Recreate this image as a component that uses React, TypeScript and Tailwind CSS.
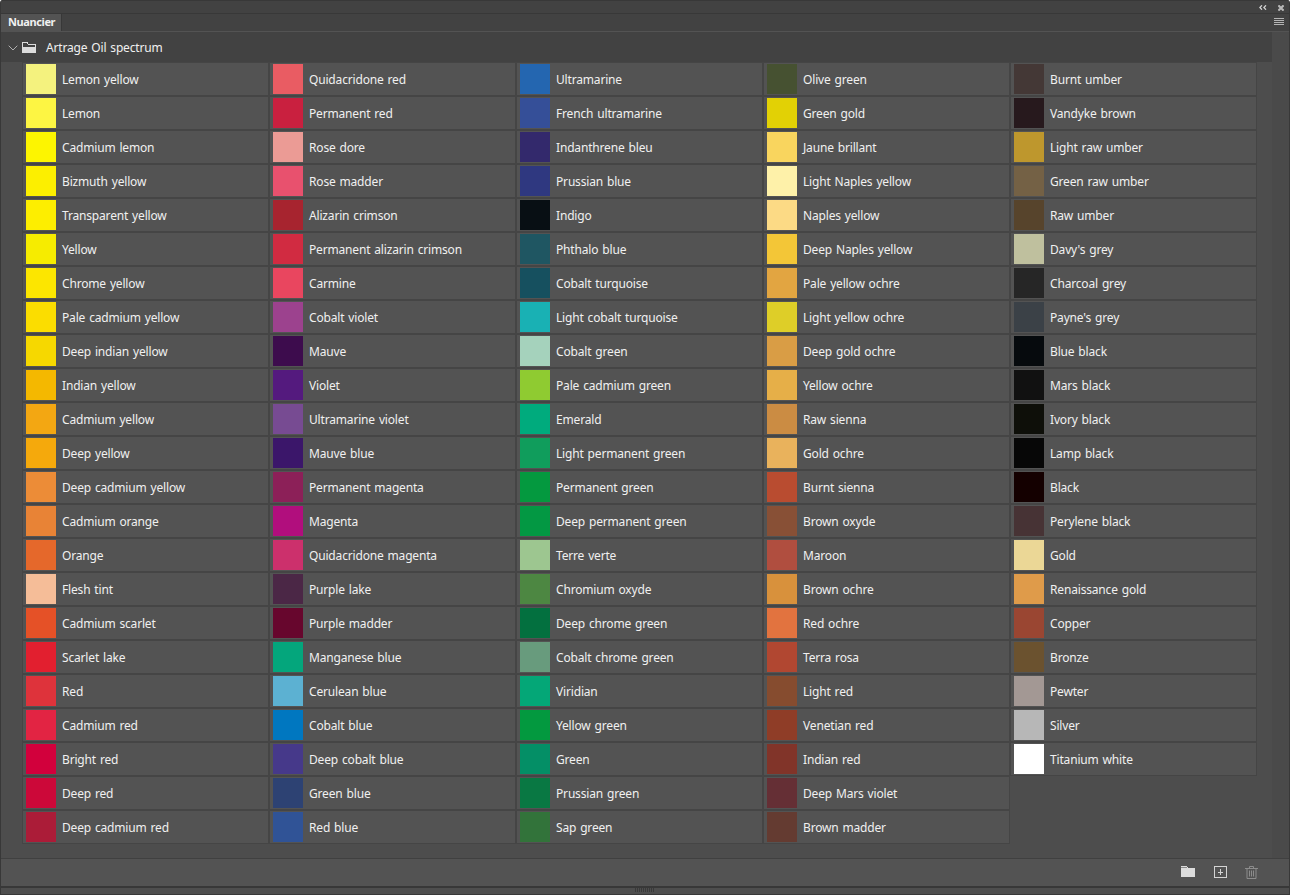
type Swatch = [name: string, color: string];

const columns: Swatch[][] = [
  [
    ["Lemon yellow", "#f4f27e"],
    ["Lemon", "#fdf543"],
    ["Cadmium lemon", "#fdf500"],
    ["Bizmuth yellow", "#fcef00"],
    ["Transparent yellow", "#fdee00"],
    ["Yellow", "#f6ec00"],
    ["Chrome yellow", "#fce600"],
    ["Pale cadmium yellow", "#fbdd00"],
    ["Deep indian yellow", "#f6d800"],
    ["Indian yellow", "#f4b800"],
    ["Cadmium yellow", "#f3a712"],
    ["Deep yellow", "#f5a90c"],
    ["Deep cadmium yellow", "#ec8c37"],
    ["Cadmium orange", "#e88336"],
    ["Orange", "#e5682b"],
    ["Flesh tint", "#f5bd98"],
    ["Cadmium scarlet", "#e55127"],
    ["Scarlet lake", "#e21f2f"],
    ["Red", "#de333b"],
    ["Cadmium red", "#e22443"],
    ["Bright red", "#d2003c"],
    ["Deep red", "#cc0839"],
    ["Deep cadmium red", "#ab1c38"],
  ],
  [
    ["Quidacridone red", "#e95c63"],
    ["Permanent red", "#c9203f"],
    ["Rose dore", "#eb9b95"],
    ["Rose madder", "#e8516e"],
    ["Alizarin crimson", "#a7242f"],
    ["Permanent alizarin crimson", "#d12b41"],
    ["Carmine", "#e9465f"],
    ["Cobalt violet", "#9c428e"],
    ["Mauve", "#3d0c4d"],
    ["Violet", "#541a7e"],
    ["Ultramarine violet", "#774b92"],
    ["Mauve blue", "#3b166a"],
    ["Permanent magenta", "#8c2058"],
    ["Magenta", "#b10e7d"],
    ["Quidacridone magenta", "#cc306c"],
    ["Purple lake", "#4b2746"],
    ["Purple madder", "#67062d"],
    ["Manganese blue", "#04a67c"],
    ["Cerulean blue", "#5cb1d2"],
    ["Cobalt blue", "#0077c0"],
    ["Deep cobalt blue", "#46398a"],
    ["Green blue", "#2d4273"],
    ["Red blue", "#305396"],
  ],
  [
    ["Ultramarine", "#2466b0"],
    ["French ultramarine", "#354f98"],
    ["Indanthrene bleu", "#33296c"],
    ["Prussian blue", "#2f3880"],
    ["Indigo", "#080f14"],
    ["Phthalo blue", "#1f5662"],
    ["Cobalt turquoise", "#16505f"],
    ["Light cobalt turquoise", "#19b1b4"],
    ["Cobalt green", "#a5d2bc"],
    ["Pale cadmium green", "#8fcb31"],
    ["Emerald", "#00ab7d"],
    ["Light permanent green", "#109d5c"],
    ["Permanent green", "#04993f"],
    ["Deep permanent green", "#039843"],
    ["Terre verte", "#9dc690"],
    ["Chromium oxyde", "#4d8742"],
    ["Deep chrome green", "#03703f"],
    ["Cobalt chrome green", "#689b7d"],
    ["Viridian", "#04a777"],
    ["Yellow green", "#03993f"],
    ["Green", "#048f66"],
    ["Prussian green", "#097843"],
    ["Sap green", "#32733a"],
  ],
  [
    ["Olive green", "#465131"],
    ["Green gold", "#e2d105"],
    ["Jaune brillant", "#f9d55e"],
    ["Light Naples yellow", "#fef1a9"],
    ["Naples yellow", "#fcda85"],
    ["Deep Naples yellow", "#f3c637"],
    ["Pale yellow ochre", "#e2a541"],
    ["Light yellow ochre", "#dece28"],
    ["Deep gold ochre", "#d99d45"],
    ["Yellow ochre", "#e6af48"],
    ["Raw sienna", "#cb8c43"],
    ["Gold ochre", "#e9b25c"],
    ["Burnt sienna", "#b94c30"],
    ["Brown oxyde", "#885036"],
    ["Maroon", "#b04e3f"],
    ["Brown ochre", "#d8913c"],
    ["Red ochre", "#e2733f"],
    ["Terra rosa", "#b14731"],
    ["Light red", "#864c2f"],
    ["Venetian red", "#8f3d27"],
    ["Indian red", "#813429"],
    ["Deep Mars violet", "#652f35"],
    ["Brown madder", "#643b31"],
  ],
  [
    ["Burnt umber", "#443836"],
    ["Vandyke brown", "#27191d"],
    ["Light raw umber", "#be972d"],
    ["Green raw umber", "#746145"],
    ["Raw umber", "#57442c"],
    ["Davy's grey", "#bfc09e"],
    ["Charcoal grey", "#262626"],
    ["Payne's grey", "#3b4147"],
    ["Blue black", "#060a0d"],
    ["Mars black", "#111111"],
    ["Ivory black", "#0e0f09"],
    ["Lamp black", "#070707"],
    ["Black", "#140000"],
    ["Perylene black", "#473335"],
    ["Gold", "#ebd796"],
    ["Renaissance gold", "#df9b4a"],
    ["Copper", "#9a4632"],
    ["Bronze", "#6b522f"],
    ["Pewter", "#a39894"],
    ["Silver", "#b7b7b7"],
    ["Titanium white", "#ffffff"],
  ],
];

function TitleBar() {
  return (
    <div className="flex h-[14px] shrink-0 items-start justify-end border-t border-b border-[#383838] bg-[#424242] pt-[4px] pr-[5px]">
      <svg width="8" height="5" viewBox="0 0 8 5" className="mr-[11px]" fill="none" stroke="#d0d0d0" strokeWidth="1.3">
        <path d="M3 .3 .9 2.500 3 4.700M7 .3 4.900 2.500 7 4.700" />
      </svg>
      <svg width="6" height="6" viewBox="0 0 6 6" fill="none" stroke="#b8b8b8" strokeWidth="2.1">
        <path d="M.4 .4l5.200 5.200M5.600 .4.4 5.600" />
      </svg>
    </div>
  );
}

function TabBar() {
  return (
    <div className="flex h-[17px] shrink-0 items-start justify-between bg-[#424242] pr-[5px]">
      <div className="h-[17px] w-[61px] border-r border-[#383838] bg-[#535353] pl-[7px] text-[11px] leading-[16px] font-bold tracking-[-0.4px] text-[#f0f0f0]">
        Nuancier
      </div>
      <svg width="10" height="8" viewBox="0 0 10 8" className="mt-[4px]" fill="#b4b4b4" shapeRendering="crispEdges">
        <path d="M0 0h10v1H0zM0 2h10v1H0zM0 4h10v1H0zM0 6h10v1H0z" />
      </svg>
    </div>
  );
}

function GroupHeader() {
  return (
    <div className="flex h-[30px] shrink-0 items-center bg-[#424242] pt-[1px] pl-[7px]">
      <svg width="10" height="6" viewBox="0 0 10 6" fill="none" stroke="#b0b0b0" strokeWidth="1">
        <path d="M.7 .7 5 5 9.3 .7" />
      </svg>
      <svg width="14" height="11" viewBox="0 0 14 11" className="ml-[4px]" shapeRendering="crispEdges">
        <path d="M.5 10.500V.5h4.500l1 1.500h7.500v8.500z" fill="none" stroke="#dcdcdc" />
        <path d="M0 5h14v6H0z" fill="#dcdcdc" />
      </svg>
      <span className="mt-[1px] ml-[10px]">Artrage Oil spectrum</span>
    </div>
  );
}

function SwatchCell({ name, color }: { name: string; color: string }) {
  return (
    <div className="flex h-[32px] items-center bg-[#535353] pl-[3px] outline outline-1 outline-[#454545]">
      <div className="size-[30px] shrink-0" style={{ backgroundColor: color }} />
      <span className="mt-[2px] ml-[6px] whitespace-nowrap">{name}</span>
    </div>
  );
}

function Footer() {
  return (
    <div className="flex h-[28px] shrink-0 items-start justify-end border-t border-[#404040] bg-[#535353] pt-[7px] pr-[31px]">
      <svg width="14" height="11" viewBox="0 0 14 11" className="mr-[19px]" fill="#dcdcdc" shapeRendering="crispEdges">
        <path d="M0 0h6v1h1v1h7v9H0z" />
        <path d="M0 1h6v1H0z" fill="#8a8a8a" />
      </svg>
      <svg width="13" height="12" viewBox="0 0 13 12" className="mr-[18px]" fill="none" stroke="#d4d4d4" shapeRendering="crispEdges">
        <path d="M.5 .5h12v11H.5zM6.500 3v6M4 6.500h5" />
      </svg>
      <svg width="13" height="13" viewBox="0 0 13 13" fill="none" stroke="#8c8c8c">
        <path d="M0 2.500h13M4.500 2V.5h4V2M2 3v9.500h9V3M4.500 4.500v6M6.500 4.500v6M8.500 4.500v6" />
      </svg>
    </div>
  );
}

export default function App() {
  return (
    <div className="flex h-[895px] w-[1290px] flex-col overflow-hidden bg-white font-['Noto_Sans',sans-serif] text-[12px] leading-[16px] tracking-[-0.17px] text-[#f0f0f0] [word-spacing:1px]">
      <div className="flex min-h-0 flex-1 flex-col overflow-hidden rounded-t-[3px] border-r border-l border-[#383838] bg-[#4d4d4d]">
        <TitleBar />
        <TabBar />
        <div className="flex min-h-0 flex-1 border-t border-[#535353]">
          <div className="flex flex-1 flex-col">
            <GroupHeader />
            <div className="grid grid-cols-[repeat(5,245px)] items-start gap-[2px] pt-[1px] pl-[22px]">
              {columns.map((column) => (
                <div key={column[0][0]} className="grid gap-[2px]">
                  {column.map(([name, color]) => (
                    <SwatchCell key={name} name={name} color={color} />
                  ))}
                </div>
              ))}
            </div>
          </div>
          {/* scrollbar track */}
          <div className="w-[17px] bg-[#4a4a4a]" />
        </div>
        <Footer />
        {/* resize grip */}
        <div className="flex h-[9px] shrink-0 justify-center gap-[1px] border-t-2 border-b border-[#383838] bg-[#4e4e4e] pr-[1px]">
          {Array.from({ length: 10 }, (_, i) => (
            <span key={i} className="h-[4px] w-px bg-[#3a3a3a]" />
          ))}
        </div>
      </div>
    </div>
  );
}
